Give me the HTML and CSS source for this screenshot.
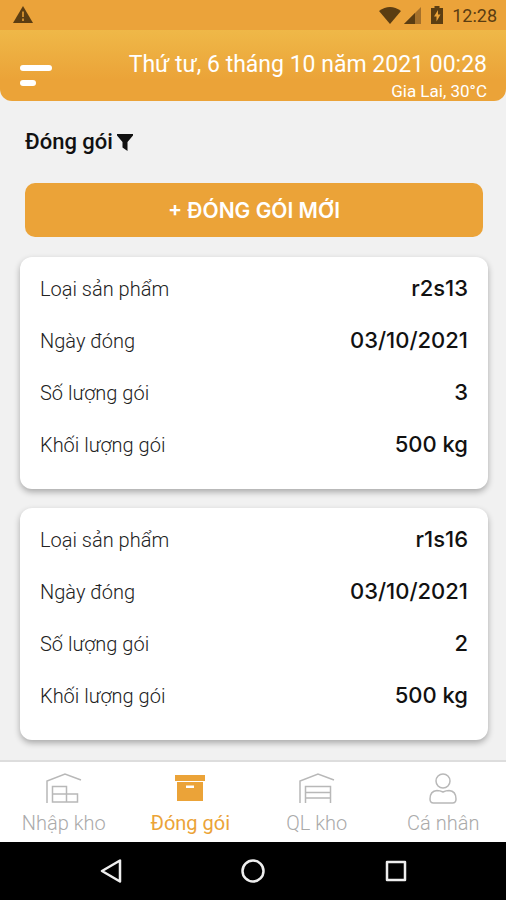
FILE: index.html
```html
<!DOCTYPE html>
<html lang="vi">

<head>
    <meta charset="UTF-8">
    <meta name="viewport" content="width=device-width, initial-scale=1.0">
    <title>Đóng gói</title>
    <link rel="stylesheet" href="styles.css">
</head>

<body>
    <div class="status-bar">
        <svg width="20" height="18" viewBox="0 0 20 18">
            <path d="M10 0 L20 17 H0 Z" fill="#5b3d12" />
            <path d="M10 5.5 V11 M10 12.5 V15" stroke="#c98a2e" stroke-width="2" />
        </svg>
        <div class="status-icons">
            <svg width="22" height="17" viewBox="0 0 22 17">
                <path d="M0 4 Q11 -4 22 4 L11 17 Z" fill="#5b3d12" />
            </svg>
            <svg class="signal" width="17" height="17" viewBox="0 0 17 17">
                <path d="M17 0 V17 H0 Z" fill="#a5702a" />
                <path d="M11 6 V17 H0 Z" fill="#5b3d12" />
            </svg>
            <svg class="battery" width="12" height="18" viewBox="0 0 12 18">
                <path d="M3.5 0 H8.5 V2 H12 V18 H0 V2 H3.5 Z" fill="#5b3d12" />
                <path d="M7 4 L3 10.5 H5.5 V15.5 L9.5 8.5 H7 Z" fill="#eba338" />
            </svg>
            <span>12:28</span>
        </div>
    </div>

    <header class="header">
        <button class="menu-button" aria-label="Menu">
            <span class="menu-line"></span>
            <span class="menu-line short"></span>
        </button>
        <div class="header-info">
            <div class="date">Thứ tư, 6 tháng 10 năm 2021 00:28</div>
            <div class="weather">Gia Lai, 30°C</div>
        </div>
    </header>

    <main class="content">
        <div class="title-row">
            <h1>Đóng gói</h1>
            <button class="filter-button" aria-label="Lọc">
                <svg width="16" height="17" viewBox="0 0 16 17">
                    <path d="M0 0 H16 V1.5 L10.5 8 V17 L5.5 13.5 V8 L0 1.5 Z" fill="#111" />
                </svg>
            </button>
        </div>

        <button class="add-button">+ ĐÓNG GÓI MỚI</button>

        <dl class="card">
            <div class="card-row">
                <dt>Loại sản phẩm</dt>
                <dd>r2s13</dd>
            </div>
            <div class="card-row">
                <dt>Ngày đóng</dt>
                <dd>03/10/2021</dd>
            </div>
            <div class="card-row">
                <dt>Số lượng gói</dt>
                <dd>3</dd>
            </div>
            <div class="card-row">
                <dt>Khối lượng gói</dt>
                <dd>500 kg</dd>
            </div>
        </dl>

        <dl class="card">
            <div class="card-row">
                <dt>Loại sản phẩm</dt>
                <dd>r1s16</dd>
            </div>
            <div class="card-row">
                <dt>Ngày đóng</dt>
                <dd>03/10/2021</dd>
            </div>
            <div class="card-row">
                <dt>Số lượng gói</dt>
                <dd>2</dd>
            </div>
            <div class="card-row">
                <dt>Khối lượng gói</dt>
                <dd>500 kg</dd>
            </div>
        </dl>
    </main>

    <!-- bottom tabs -->
    <nav class="tabs">
        <a class="tab" href="#nhap-kho">
            <svg width="36" height="32" viewBox="0 0 36 32" fill="none" stroke="#b8b8b8" stroke-width="1.5">
                <path d="M1 31 V9 L19 2 L35 8" />
                <path d="M6.5 14.5 H20.5 V30 H6.5 Z M6.5 22 H31.5 V30 H20.5" />
            </svg>
            <span>Nhập kho</span>
        </a>
        <a class="tab active" href="#dong-goi">
            <svg width="30" height="32" viewBox="0 0 30 32" fill="#eba338">
                <path d="M0 3 H30 V9 H0 Z" />
                <path fill-rule="evenodd" d="M2 10 H28 V29 H2 Z M11 13.5 V16 H19 V13.5 Z" />
            </svg>
            <span>Đóng gói</span>
        </a>
        <a class="tab" href="#ql-kho">
            <svg width="36" height="32" viewBox="0 0 36 32" fill="none" stroke="#b8b8b8" stroke-width="1.5">
                <path d="M1 31 V9 L19 2 L35 8" />
                <path d="M6.5 31 V14.5 H31.5 V31 M6.5 20.5 H31.5 M6.5 26 H31.5" />
            </svg>
            <span>QL kho</span>
        </a>
        <a class="tab" href="#ca-nhan">
            <svg width="28" height="32" viewBox="0 0 28 32" fill="none" stroke="#b8b8b8" stroke-width="1.5">
                <circle cx="14" cy="9" r="7" />
                <path d="M8 18.5 Q11 18.5 14 20 Q17 18.5 20 18.5 Q27 19 27 27 Q27 31 23.5 31 H4.5 Q1 31 1 27 Q1 19 8 18.5 Z" />
            </svg>
            <span>Cá nhân</span>
        </a>
    </nav>

    <div class="system-bar">
        <button aria-label="Quay lại">
            <svg width="24" height="24" viewBox="0 0 24 24" fill="none" stroke="#eee" stroke-width="2.5" stroke-linejoin="round">
                <path d="M22 1.5 V22.5 L4 12 Z" />
            </svg>
        </button>
        <button aria-label="Trang chủ">
            <svg width="24" height="24" viewBox="0 0 24 24" fill="none" stroke="#eee" stroke-width="2.5">
                <circle cx="12" cy="12" r="10.5" />
            </svg>
        </button>
        <button aria-label="Ứng dụng gần đây">
            <svg width="24" height="24" viewBox="0 0 24 24" fill="none" stroke="#eee" stroke-width="2.5" stroke-linejoin="round">
                <path d="M3 3 H21 V21 H3 Z" />
            </svg>
        </button>
    </div>
</body>

</html>
```
FILE: styles.css
```css
* {
    box-sizing: border-box;
}

body {
    font-family: Roboto, sans-serif;
    background-color: #f1f1f1;
    margin: 0;
    min-height: 100vh;
    display: flex;
    flex-direction: column;
}

button {
    border: none;
    background: none;
    padding: 0;
    font-family: inherit;
    cursor: pointer;
}

svg {
    display: block;
}

/* status bar */

.status-bar {
    display: flex;
    align-items: center;
    justify-content: space-between;
    height: 30px;
    padding: 0 9px 0 13px;
    background-color: #eba33a;
}

.status-icons {
    display: flex;
    align-items: center;
    color: #5b3d12;
    font-size: 18px;
}

.signal {
    margin: 0 10px 0 3px;
}

.battery {
    margin-right: 9px;
}

/* header */

.header {
    display: flex;
    align-items: flex-start;
    justify-content: space-between;
    height: 71px;
    padding: 20px 19px 0 20px;
    background: linear-gradient(#efb848, #eba338 70%);
    border-radius: 0 0 12px 12px;
    color: #fff;
}

.menu-button {
    display: flex;
    flex-direction: column;
    gap: 9px;
    padding-top: 15px;
}

.menu-line {
    width: 32px;
    height: 6px;
    border-radius: 3px;
    background-color: #fff;
}

.menu-line.short {
    width: 16px;
}

.header-info {
    text-align: right;
}

.date {
    font-size: 23px;
    line-height: 29px;
}

.weather {
    font-size: 17px;
    line-height: 24px;
}

/* content */

.content {
    flex: 1;
    padding: 26px 18px 20px 20px;
}

.title-row {
    display: flex;
    align-items: center;
    gap: 4px;
    padding-left: 5px;
}

h1 {
    margin: 0;
    font-size: 22px;
    font-weight: 500;
    line-height: 30px;
    color: #111;
}

.add-button {
    display: block;
    width: calc(100% - 10px);
    height: 54px;
    margin: 26px 5px 20px;
    border-radius: 10px;
    background-color: #eba338;
    color: #fff;
    font-family: Inter, sans-serif;
    font-size: 21px;
    font-weight: 600;
}

.card {
    margin: 0 0 19px;
    padding: 5px 20px 19px;
    background-color: #fff;
    border-radius: 12px;
    box-shadow: 0 3px 6px rgba(0, 0, 0, 0.3);
}

.card:last-child {
    margin-bottom: 0;
}

.card-row {
    display: flex;
    align-items: baseline;
    justify-content: space-between;
    height: 52px;
    line-height: 52px;
}

dt {
    font-size: 20px;
    font-weight: 300;
    color: #222;
}

dd {
    margin: 0;
    font-family: Inter, sans-serif;
    font-size: 22px;
    font-weight: 500;
    color: #111;
}

/* tabs */

.tabs {
    display: flex;
    height: 82px;
    border-top: 2px solid #ddd;
    background-color: #fff;
}

.tab {
    flex: 1;
    display: flex;
    flex-direction: column;
    align-items: center;
    gap: 6px;
    padding: 10px 0 0 1px;
    color: #aaa;
    font-size: 20px;
    font-weight: 300;
    line-height: 26px;
    text-decoration: none;
}

.tab.active {
    color: #eba338;
    font-weight: 400;
}

.system-bar {
    display: flex;
    align-items: center;
    justify-content: space-between;
    height: 58px;
    padding: 0 98px;
    background-color: #000;
}
```
